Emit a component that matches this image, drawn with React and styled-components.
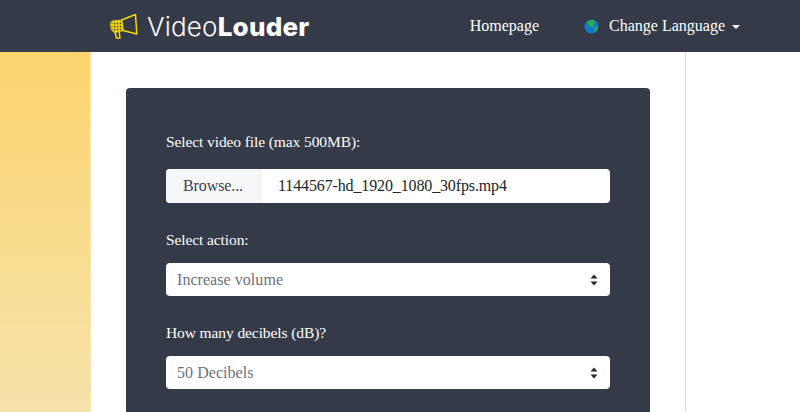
import React from "react";
import styled, { createGlobalStyle } from "styled-components";

const GlobalStyle = createGlobalStyle`
  html, body {
    margin: 0;
    padding: 0;
    height: 412px;
    overflow: hidden;
    background: #fff;
  }
  * {
    box-sizing: border-box;
  }
`;

const Page = styled.div`
  width: 800px;
  height: 412px;
  overflow: hidden;
  font-family: "Liberation Serif", serif;
  display: flex;
  flex-direction: column;
`;

const Header = styled.header`
  flex: 0 0 52px;
  background: #343a48;
  display: flex;
  align-items: center;
  padding: 0 60px 0 110px;
`;

const Brand = styled.div`
  display: flex;
  align-items: center;
  gap: 9px;
  flex: 1;
  font-family: "Inter", "Liberation Sans", sans-serif;
  font-size: 26px;
  letter-spacing: 0.2px;
  color: #fff;
  font-weight: 300;
  b {
    font-weight: 800;
  }
`;

const Nav = styled.nav`
  display: flex;
  align-items: center;
  gap: 45px;
  color: #fff;
  font-size: 16px;
`;

const LangLink = styled.a`
  display: flex;
  align-items: center;
  gap: 10px;
`;

const Caret = styled.span`
  width: 0;
  height: 0;
  margin-left: -3px;
  margin-top: 2px;
  border-left: 4px solid transparent;
  border-right: 4px solid transparent;
  border-top: 4px solid #fff;
`;

const Body = styled.div`
  flex: 1;
  display: flex;
  min-height: 0;
`;

const Side = styled.div`
  flex: 0 0 91px;
  background: linear-gradient(180deg, #fdd56f 0%, #f5e2aa 100%);
  border-right: 1px solid #fde7b0;
`;

const Main = styled.main`
  flex: 0 0 595px;
  border-right: 1px solid #fbdc8e;
  background: #fff;
  padding: 36px 35px 0 35px;
  overflow: hidden;
`;

const Panel = styled.section`
  background: #343a48;
  border-radius: 4px;
  padding: 45px 40px 0;
  height: 400px;
  display: flex;
  flex-direction: column;
`;

const Label = styled.label`
  display: block;
  color: #fff;
  font-size: 15.5px;
  line-height: 18px;
  letter-spacing: -0.1px;
  margin-bottom: ${(p) => p.$gap || 14}px;
`;

const FileField = styled.div`
  flex: 0 0 34px;
  background: #fff;
  border-radius: 4px;
  display: flex;
  align-items: center;
  font-size: 16px;
  color: #212529;
  overflow: hidden;
  margin-bottom: 28px;
`;

const BrowseButton = styled.span`
  flex: 0 0 95px;
  height: 100%;
  background: #f6f7f9;
  border-right: 1px solid #eceef1;
  color: #3c4250;
  text-align: center;
  line-height: 34px;
  letter-spacing: -0.1px;
`;

const FileName = styled.span`
  padding-left: 17px;
  letter-spacing: -0.13px;
`;

const Select = styled.div`
  flex: 0 0 33px;
  background: #fff;
  border-radius: 4px;
  display: flex;
  align-items: center;
  justify-content: space-between;
  padding: 0 12px 0 11px;
  color: #6b7280;
  font-size: 16px;
  letter-spacing: 0.05px;
  margin-bottom: 28px;
`;

const Megaphone = () => (
  <svg width="28" height="27" viewBox="0 0 28 27" fill="none">
    <defs>
      <pattern id="dots" width="3" height="3" patternUnits="userSpaceOnUse">
        <rect width="3" height="3" fill="#f5d90a" />
        <rect x="0.8" y="0.8" width="1.5" height="1.5" fill="#343a48" />
      </pattern>
    </defs>
    <path d="M11.5 7 L25.5 1.5 L26.8 21 L13 17.5 Z" stroke="#f5d90a" strokeWidth="1.5" strokeLinejoin="round" />
    <path d="M11.5 7 L3 8 C0.8 8.5 0.3 10 0.8 13 C1.3 17 2.5 19 5 19.5 L13 17.5 Z" fill="url(#dots)" stroke="#f5d90a" strokeWidth="1" />
    <path d="M5 19.5 L6.5 25 L10 25 L9.2 18.8" stroke="#f5d90a" strokeWidth="1.5" strokeLinejoin="round" />
  </svg>
);

const Globe = () => (
  <svg width="15" height="15" viewBox="0 0 15 15">
    <circle cx="7.5" cy="7.5" r="7" fill="#0f7cc8" />
    <path d="M4 2 L9 1 L11.5 3 L9.5 5 L10.5 7 L7.5 8.5 L5 6.5 L3 4.5 Z" fill="#2fa84f" />
    <path d="M10.5 9 L14 7.5 L13.5 11 L10.5 13.5 Z" fill="#2fa84f" />
  </svg>
);

const SelectArrows = () => (
  <svg width="8" height="12" viewBox="0 0 8 12">
    <path d="M4 0.5 L7.5 4.5 H0.5 Z M4 11.5 L0.5 7.5 H7.5 Z" fill="#23272f" />
  </svg>
);

export default function App() {
  return (
    <Page>
      <GlobalStyle />
      <Header>
        <Brand>
          <Megaphone />
          <span>
            Video<b>Louder</b>
          </span>
        </Brand>
        <Nav>
          <a>Homepage</a>
          <LangLink>
            <Globe />
            Change Language
            <Caret />
          </LangLink>
        </Nav>
      </Header>
      <Body>
        <Side />
        <Main>
          <Panel>
            <Label $gap={18}>Select video file (max 500MB):</Label>
            <FileField>
              <BrowseButton>Browse...</BrowseButton>
              <FileName>1144567-hd_1920_1080_30fps.mp4</FileName>
            </FileField>
            <Label>Select action:</Label>
            <Select>
              Increase volume
              <SelectArrows />
            </Select>
            <Label>How many decibels (dB)?</Label>
            <Select>
              50 Decibels
              <SelectArrows />
            </Select>
          </Panel>
        </Main>
      </Body>
    </Page>
  );
}
